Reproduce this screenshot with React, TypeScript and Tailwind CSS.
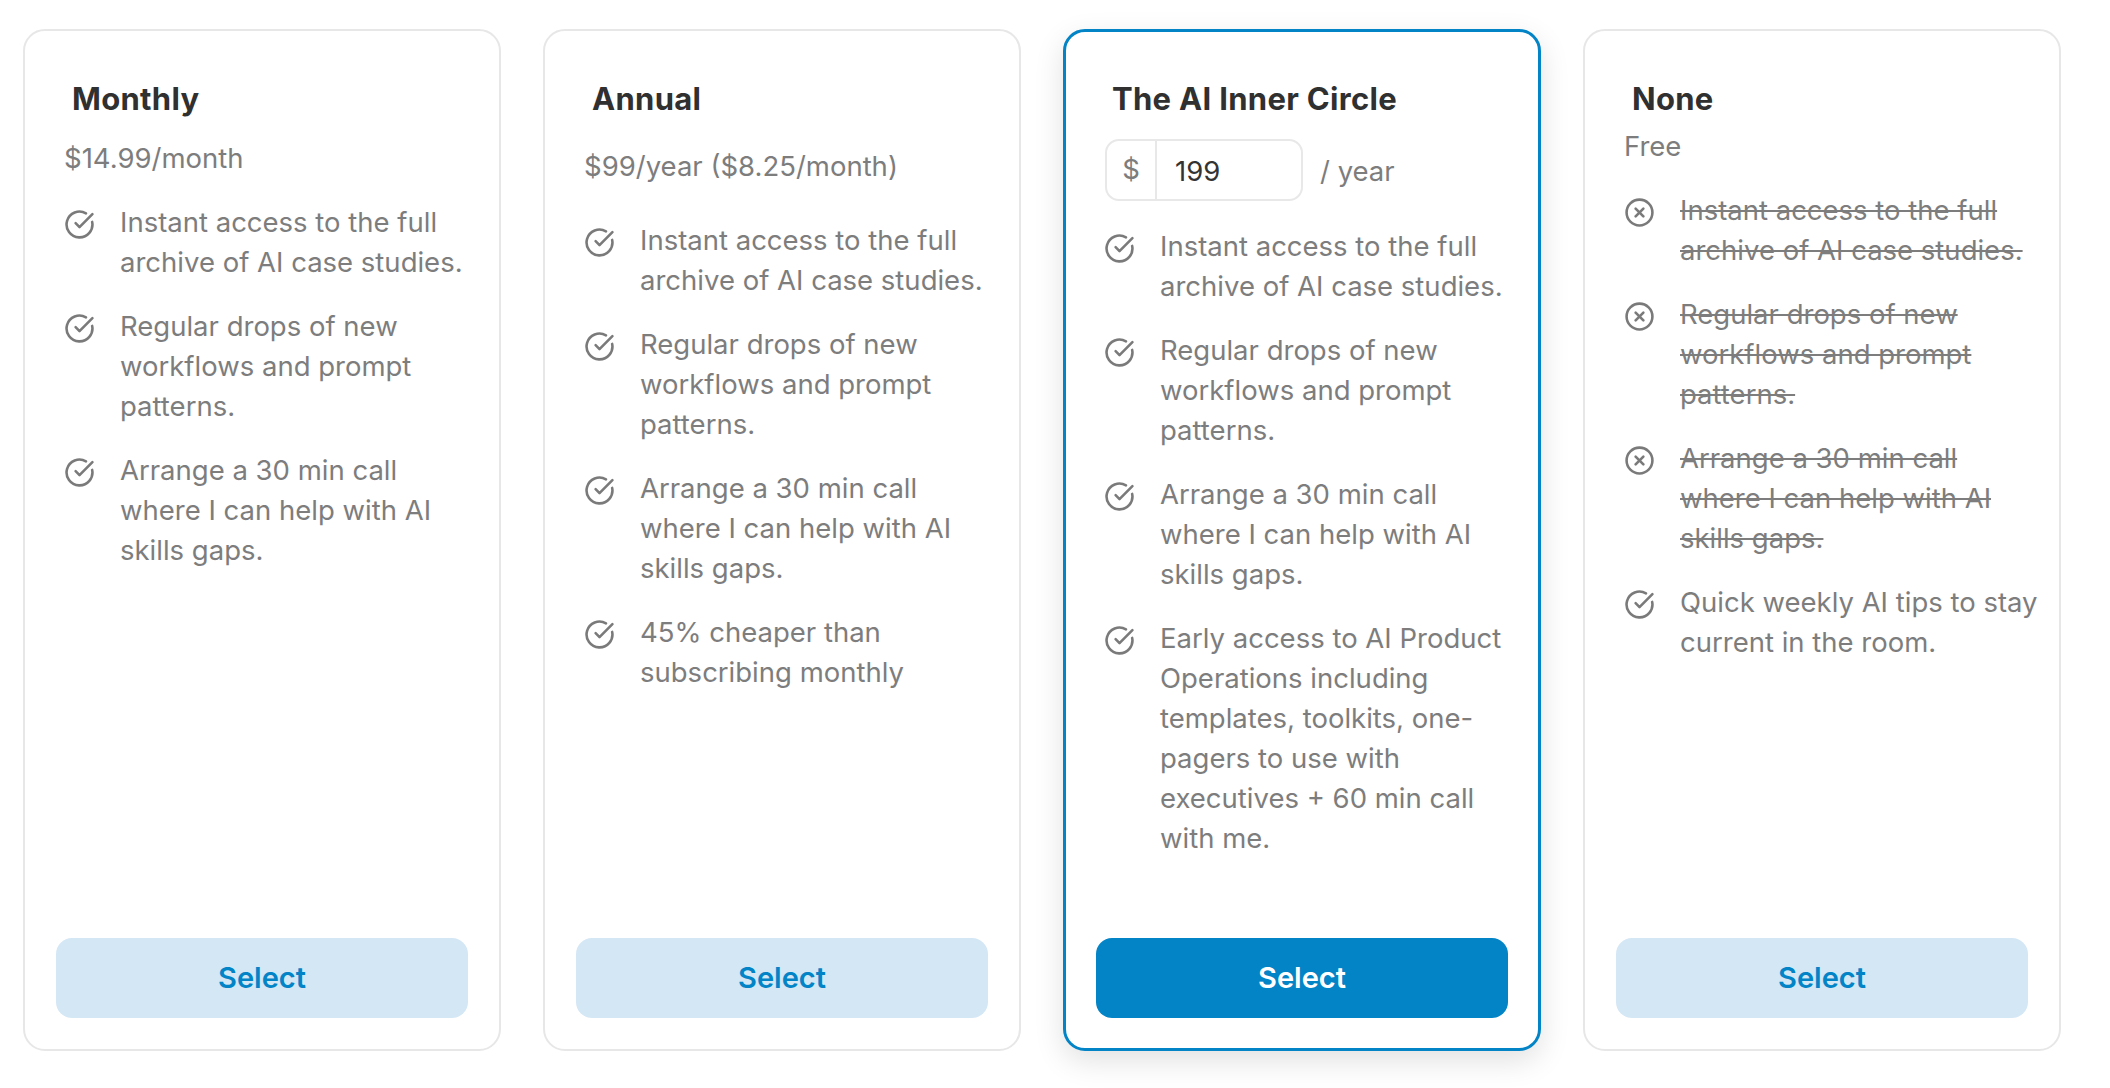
import { CircleCheckBig, CircleX } from "lucide-react";
import clsx from "clsx";

type Feature = { text: string; included: boolean; lead?: string };

type Plan = {
  name: string;
  price?: string;
  custom?: boolean;
  selected?: boolean;
  priceGap: string;
  listGap: string;
  features: Feature[];
};

const core = [
  "Instant access to the full archive of AI case studies.",
  "Regular drops of new workflows and prompt patterns.",
  "Arrange a 30 min call where I can help with AI skills gaps.",
];

const plans: Plan[] = [
  {
    name: "Monthly",
    price: "$14.99/month",
    priceGap: "mt-[21px]",
    listGap: "mt-[24px]",
    features: core.map((text) => ({ text, included: true })),
  },
  {
    name: "Annual",
    price: "$99/year ($8.25/month)",
    priceGap: "mt-[29px]",
    listGap: "mt-[34px]",
    features: [...core, "45% cheaper than subscribing monthly"].map((text) => ({ text, included: true })),
  },
  {
    name: "The AI Inner Circle",
    custom: true,
    selected: true,
    priceGap: "mt-[22px]",
    listGap: "mt-[25px]",
    features: [
      ...core,
      "Early access to AI Product Operations including templates, toolkits, one-pagers to use with executives + 60 min call with me.",
    ].map((text) => ({ text, included: true })),
  },
  {
    name: "None",
    price: "Free",
    priceGap: "mt-[9px]",
    listGap: "mt-[24px]",
    features: [
      ...core.map((text) => ({ text, included: false })),
      { lead: "Quick weekly AI tips to stay", text: " current in the room.", included: true },
    ],
  },
];

function PlanCard({ plan }: { plan: Plan }) {
  return (
    <div
      className={clsx(
        "flex h-[1022px] w-[478px] shrink-0 flex-col rounded-[22px] bg-white",
        plan.selected
          ? "border-[3px] border-[#0284c7] px-[30px] pt-[49px] pb-[30px] shadow-[0_10px_30px_rgba(0,0,0,0.12)]"
          : "border-2 border-[#e7e7e7] px-[31px] pt-[50px] pb-[31px]"
      )}
    >
      <div className="pl-[8px]">
        <h3 className="ml-[8px] text-[31px] font-bold leading-[36px] tracking-[0.01em] text-[#303030]">{plan.name}</h3>

        {plan.custom ? (
          <div className={clsx("ml-[1px] flex items-center", plan.priceGap)}>
            <div className="flex h-[62px] w-[198px] overflow-hidden rounded-[14px] border-2 border-[#e8e8e8]">
              <span className="flex w-[50px] shrink-0 items-center justify-center border-r-2 border-[#e8e8e8] text-[27.5px] text-[#7d7d7d]">
                $
              </span>
              <input
                defaultValue="199"
                className="w-full min-w-0 bg-transparent pt-[4px] pl-[18px] text-[27.5px] text-[#333333] outline-none"
              />
            </div>
            <span className="ml-[17px] pt-[3px] text-[27.5px] text-[#7d7d7d]">/ year</span>
          </div>
        ) : (
          <p className={clsx("text-[27.5px] leading-[40px] text-[#7d7d7d]", plan.priceGap)}>{plan.price}</p>
        )}

        <ul className={clsx("flex flex-col gap-[24px]", plan.listGap)}>
          {plan.features.map((f) => (
            <li key={f.text} className="flex items-start gap-[25px]">
              {f.included ? (
                <CircleCheckBig size={31} strokeWidth={2} className="mt-[7px] shrink-0 text-[#7a7a7a]" />
              ) : (
                <CircleX size={31} strokeWidth={2} className="mt-[7px] shrink-0 text-[#7a7a7a]" />
              )}
              <span
                className={clsx(
                  "w-[357px] shrink-0 text-[27.5px] leading-[40px] text-[#7d7d7d]",
                  !f.included && "line-through decoration-2"
                )}
              >
                {f.lead && <span className="whitespace-nowrap">{f.lead}</span>}
                {f.text}
              </span>
            </li>
          ))}
        </ul>
      </div>

      <button
        className={clsx(
          "mt-auto h-[80px] w-full rounded-[16px] text-[29px] font-semibold",
          plan.selected ? "bg-[#0284c7] text-white" : "bg-[#d4e7f5] text-[#0284c7]"
        )}
      >
        Select
      </button>
    </div>
  );
}

export default function App() {
  return (
    <div className="min-h-screen bg-white font-['Inter',sans-serif]">
      <div className="flex gap-[42px] pl-[23px] pt-[29px]">
        {plans.map((plan) => (
          <PlanCard key={plan.name} plan={plan} />
        ))}
      </div>
    </div>
  );
}
